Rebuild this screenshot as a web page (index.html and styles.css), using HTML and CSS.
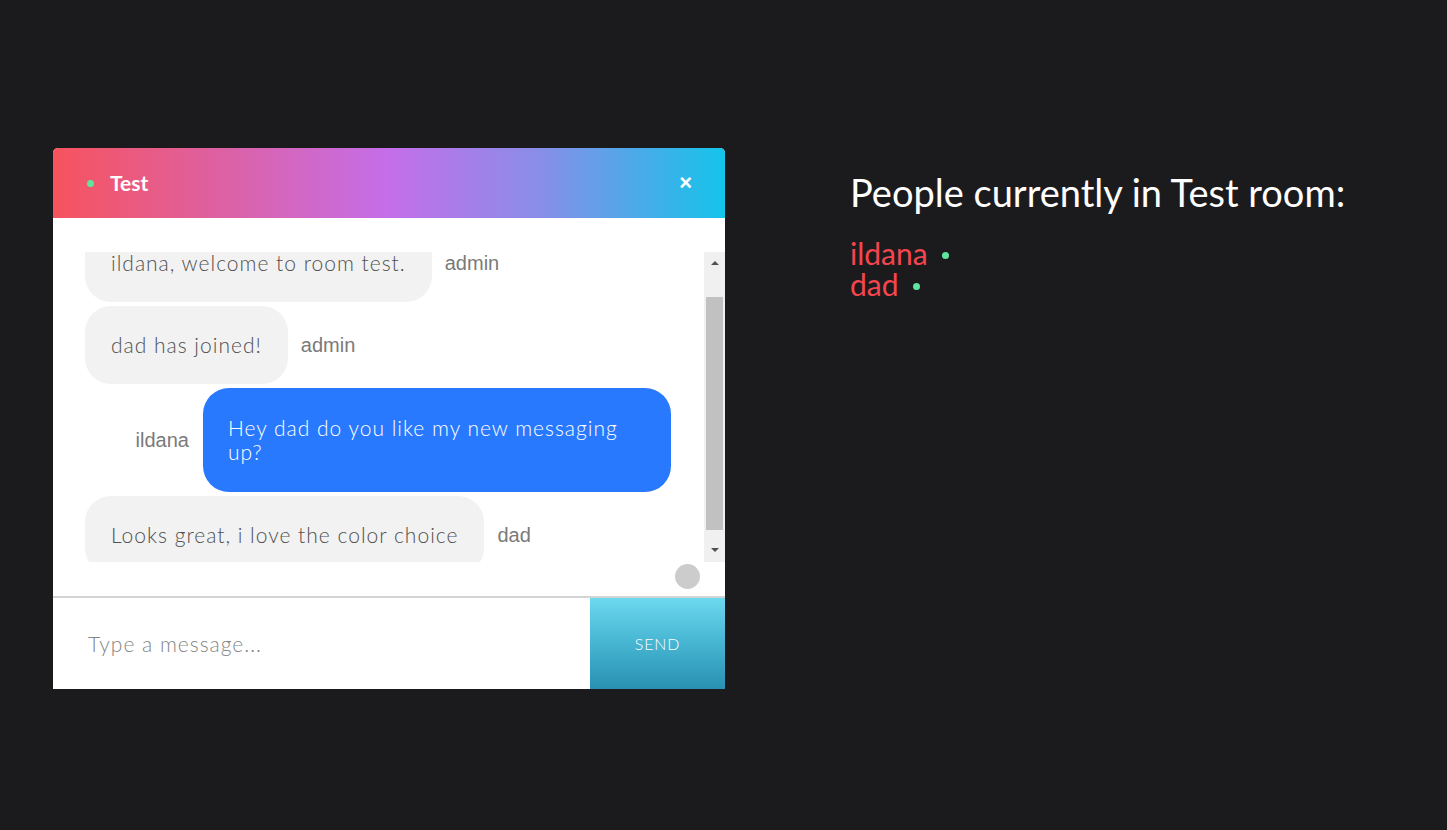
FILE: index.html
```html
<!DOCTYPE html>
<html lang="en">
<head>
<meta charset="utf-8">
<title>Chat - Test room</title>
<link rel="stylesheet" href="styles.css">
</head>
<body>
<div class="page">
  <section class="chat">
    <header class="chat-header">
      <span class="status-dot"></span>
      <span class="chat-title">Test</span>
      <span class="chat-close">&times;</span>
    </header>
    <div class="chat-body">
      <div class="viewport">
        <div class="messages">
          <div class="message-list">
            <div class="row incoming first">
              <div class="bubble">ildana, welcome to room test.</div>
              <span class="author">admin</span>
            </div>
            <div class="row incoming">
              <div class="bubble">dad has joined!</div>
              <span class="author">admin</span>
            </div>
            <div class="row outgoing">
              <span class="author">ildana</span>
              <div class="bubble mine">Hey dad do you like my new messaging up?</div>
            </div>
            <div class="row incoming">
              <div class="bubble">Looks great, i love the color choice</div>
              <span class="author">dad</span>
            </div>
          </div>
        </div>
        <div class="scrollbar">
          <span class="arrow up"></span>
          <span class="thumb-gap-top"></span>
          <span class="thumb"></span>
          <span class="thumb-gap-bottom"></span>
          <span class="arrow down"></span>
        </div>
      </div>
      <div class="typing-row"><span class="typing-dot"></span></div>
    </div>
    <div class="composer">
      <div class="composer-input">Type a message...</div>
      <div class="send-btn">SEND</div>
    </div>
  </section>
  <aside class="room-panel">
    <h1 class="room-title">People currently in Test room:</h1>
    <ul class="people">
      <li class="person">ildana <span class="online-dot"></span></li>
      <li class="person">dad <span class="online-dot"></span></li>
    </ul>
  </aside>
</div>
</body>
</html>
```
FILE: styles.css
```css
html, body {
  margin: 0;
  padding: 0;
  background: #1b1b1d;
  height: 100%;
}

body {
  font-family: "Lato", "Open Sans", sans-serif;
}

.page {
  display: flex;
  align-items: flex-start;
  gap: 125px;
  padding: 148px 0 0 53px;
}

/* ---------- chat box ---------- */
.chat {
  width: 672px;
  background: #ffffff;
  border-radius: 5px 5px 0 0;
  overflow: hidden;
  flex-shrink: 0;
}

.chat-header {
  height: 70px;
  display: flex;
  align-items: center;
  padding: 0 33px 0 34px;
  background: linear-gradient(90deg, #f7535e 0%, #dd61a3 25%, #c46eea 50%, #8a8de8 72%, #14c4ea 100%);
}

.status-dot {
  width: 7px;
  height: 7px;
  border-radius: 50%;
  background: #5ee6a0;
}

.chat-title {
  margin-left: 16px;
  color: #ffffff;
  font-weight: 700;
  font-size: 21px;
  line-height: 24px;
}

.chat-close {
  margin-left: auto;
  color: #ffffff;
  font-family: "Liberation Sans", Arial, sans-serif;
  font-weight: 700;
  font-size: 22px;
  line-height: 22px;
}

.chat-body {
  height: 378px;
  padding-top: 34px;
  box-sizing: border-box;
  display: flex;
  flex-direction: column;
}

.viewport {
  height: 310px;
  display: flex;
}

.messages {
  flex: 1;
  overflow: hidden;
  padding: 0 33px 0 32px;
}

.message-list {
  margin-top: -28px;
  display: flex;
  flex-direction: column;
  gap: 4px;
}

.row {
  display: flex;
  align-items: center;
}

.row.incoming {
  justify-content: flex-start;
  gap: 13px;
}

.row.outgoing {
  justify-content: flex-end;
  gap: 14px;
}

.bubble {
  background: #f2f2f2;
  color: #505050;
  font-weight: 300;
  font-size: 21px;
  line-height: 22px;
  padding: 28px 26px;
  border-radius: 26px;
  box-sizing: border-box;
  letter-spacing: 1px;
}

.bubble.mine {
  background: #2979ff;
  color: #ffffff;
  max-width: 468px;
  line-height: 24px;
  padding: 28px 25px;
}

.author {
  font-family: "Liberation Sans", Arial, sans-serif;
  font-size: 20px;
  color: #7a7a7a;
}

/* fake classic scrollbar */
.scrollbar {
  width: 21px;
  background: #f0f0f0;
  display: flex;
  flex-direction: column;
  align-items: center;
}

.arrow {
  width: 0;
  height: 0;
  border-left: 4px solid transparent;
  border-right: 4px solid transparent;
}

.arrow.up {
  margin-top: 9px;
  border-bottom: 4px solid #505050;
}

.arrow.down {
  margin-bottom: 10px;
  border-top: 4px solid #505050;
}

.thumb-gap-top {
  height: 32px;
}

.thumb {
  width: 17px;
  height: 233px;
  background: #c1c1c1;
}

.thumb-gap-bottom {
  flex: 1;
}

.typing-row {
  flex: 1;
  display: flex;
  justify-content: flex-end;
  align-items: flex-start;
  padding: 2px 25px 0 0;
}

.typing-dot {
  width: 25px;
  height: 25px;
  border-radius: 50%;
  background: #cccccc;
}

/* composer */
.composer {
  display: flex;
  height: 93px;
  border-top: 2px solid #d4d4d4;
  box-sizing: border-box;
}

.composer-input {
  flex: 1;
  display: flex;
  align-items: center;
  padding-left: 35px;
  font-weight: 300;
  font-size: 21px;
  color: #858585;
  letter-spacing: 1px;
}

.send-btn {
  width: 135px;
  display: flex;
  align-items: center;
  justify-content: center;
  background: linear-gradient(180deg, #6dd8ee 0%, #46b5d2 50%, #2990b2 100%);
  color: #ffffff;
  font-size: 16px;
  font-weight: 300;
  letter-spacing: 0.8px;
}

/* ---------- right panel ---------- */
.room-panel {
  padding-top: 20px;
}

.room-title {
  margin: 0;
  color: #ffffff;
  font-weight: 400;
  font-size: 38px;
  line-height: 48px;
}

.people {
  list-style: none;
  margin: 22px 0 0 0;
  padding: 0;
}

.person {
  color: #f5464f;
  font-size: 30px;
  line-height: 31px;
  display: flex;
  align-items: center;
  gap: 14px;
}

.online-dot {
  width: 7px;
  height: 7px;
  border-radius: 50%;
  background: #5ee6a0;
  margin-top: 3px;
}
```
